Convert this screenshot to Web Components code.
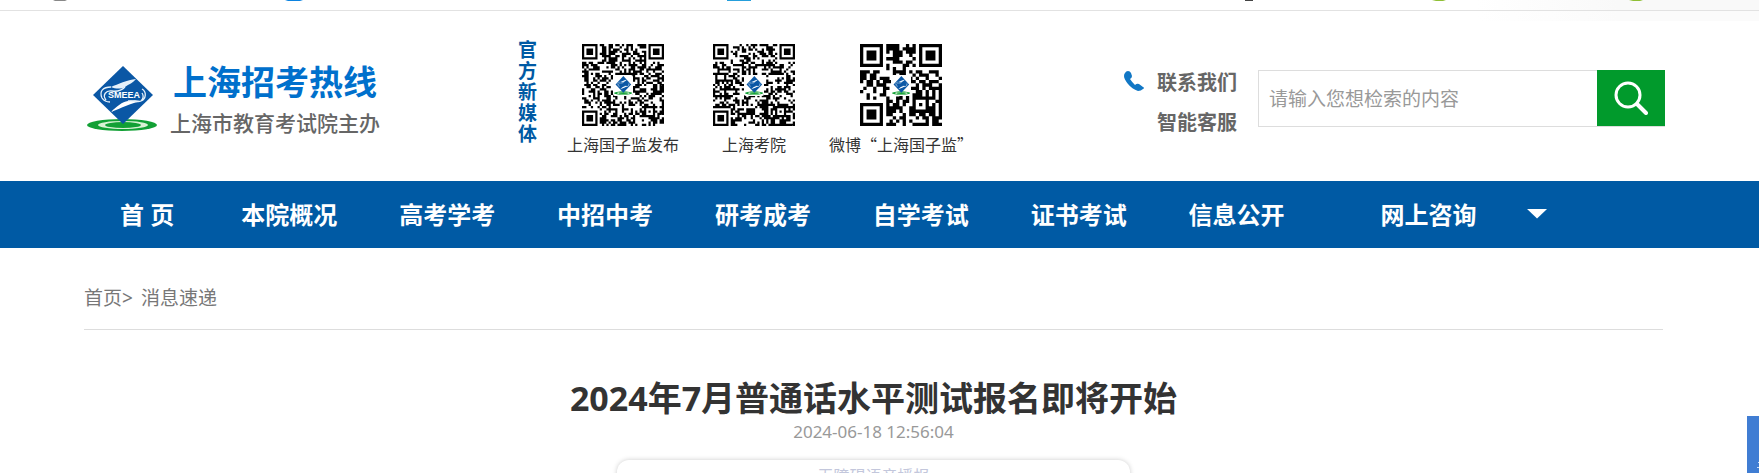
<!DOCTYPE html>
<html lang="zh-CN">
<head>
<meta charset="UTF-8">
<title>上海招考热线</title>
<style>
    html, body { margin: 0; height: 100%; overflow: hidden; }
    body {
        background: #fff; color: #333;
        font-family: "Noto Sans", "Noto Sans CJK SC", sans-serif;
        --blue: #005aa4; --line: #ddd;
        --left: 84px; --right: 96px;
    }
</style>
</head>
<body>
<top-strip></top-strip>
<site-header>
    <site-logo slot="logo"></site-logo>
    <qr-card slot="media" size="37" seed="11">上海国子监发布</qr-card>
    <qr-card slot="media" size="37" seed="29">上海考院</qr-card>
    <qr-card slot="media" size="25" seed="47">微博“上海国子监”</qr-card>
    <contact-links slot="tools"></contact-links>
    <site-search slot="tools"></site-search>
</site-header>
<site-nav></site-nav>
<page-crumb></page-crumb>
<news-article date="2024-06-18 12:56:04">2024年7月普通话水平测试报名即将开始</news-article>
<side-tab></side-tab>

<script>
const emblem = `
    <ellipse cx="35" cy="59" rx="35" ry="6" fill="#12a035"/>
    <ellipse cx="36" cy="59" rx="25" ry="4" fill="#d9f2d4"/>
    <ellipse cx="36" cy="59" rx="18" ry="3" fill="#12a035"/>
    <path d="M36 0L66 29L36 58L6 29Z" fill="#0a57a5"/>
    <path d="M49 13C40 14 31 18 24 21C29 23 34 23 38 21C42 18 46 17 49 13Z" fill="#e6f1fa"/>
    <path d="M24 46C30 40 35 36 41 35C46 34 50 34 54 35C45 37 34 42 24 46Z" fill="#fff"/>
    <path d="M24 21C16 21 12 25 15 32C17 35 20 36 23 36M19 34C15 29 19 24 25 25C31 26 35 24 38 21M41 35C48 34 50 37 54 35C59 33 60 26 55 23M54 35C56 33 57 30 55 27" fill="none" stroke="#e6f1fa" stroke-width="1.3"/>`;

class TopStrip extends HTMLElement {
    constructor() {
        super();
        this.attachShadow({ mode: 'open' });
        this.shadowRoot.innerHTML = `
        <style>
            :host { display: block; height: 10px; border-bottom: 1px solid #e2e2e2; background: linear-gradient(90deg, #fff 84%, #f9f9f9 92%); }
            svg { display: block; width: 100%; height: 2px; }
        </style>
        <svg viewBox="0 0 1759 2" preserveAspectRatio="none">
            <path d="M53 0h14l-2 1h-10z" fill="#888"/>
            <path d="M285 0h18l-3 1h-12z" fill="#0c83e0"/>
            <path d="M727 0h24v1h-24z" fill="#259edb"/>
            <path d="M1245 0h8v1h-8z" fill="#444"/>
            <path d="M1432 0h14l-3 1h-7zM1629 0h14l-3 1h-7z" fill="#8fbf35"/>
        </svg>`;
    }
}
customElements.define('top-strip', TopStrip);

class SiteHeader extends HTMLElement {
    constructor() {
        super();
        this.attachShadow({ mode: 'open' });
        this.shadowRoot.innerHTML = `
        <style>
            :host { display: flex; align-items: flex-start; padding: 28px 94px 27px var(--left); background: linear-gradient(90deg, #fff 84%, #fbfbfb 92%) top / 100% 10px no-repeat; }
            .logo { flex: 0 0 434px; }
            .media { display: flex; align-items: flex-start; gap: 34px; }
            h2 { margin: 1px -4px 0 0; width: 19px; font-size: 19px; line-height: 21px; font-weight: 700; color: var(--blue); word-break: break-all; }
            .tools { display: flex; align-items: flex-start; gap: 21px; margin-left: auto; padding-top: 31px; }
        </style>
        <div class="logo"><slot name="logo"></slot></div>
        <div class="media"><h2>官方新媒体</h2><slot name="media"></slot></div>
        <div class="tools"><slot name="tools"></slot></div>`;
    }
}
customElements.define('site-header', SiteHeader);

class SiteLogo extends HTMLElement {
    constructor() {
        super();
        this.attachShadow({ mode: 'open' });
        this.shadowRoot.innerHTML = `
        <style>
            :host { display: block; padding: 23px 0 0 3px; }
            a { display: flex; gap: 12px; color: #666; text-decoration: none; }
            svg { width: 71px; height: 65px; margin-top: 4px; }
            text { font: 700 9px "Liberation Sans", sans-serif; fill: #fff; }
            b, span { display: block; white-space: nowrap; }
            b { font-size: 34px; line-height: 40px; color: #0070cc; padding-left: 3px; }
            span { font-size: 21px; line-height: 40px; font-weight: 500; font-family: "Noto Sans CJK SC", sans-serif; }
        </style>
        <a href="#">
            <svg viewBox="0 0 71 65">${emblem}<text x="37" y="32" text-anchor="middle">SMEEA</text></svg>
            <div><b>上海招考热线</b><span>上海市教育考试院主办</span></div>
        </a>`;
    }
}
customElements.define('site-logo', SiteLogo);

class QrCard extends HTMLElement {
    constructor() {
        super();
        this.attachShadow({ mode: 'open' });
    }

    connectedCallback() { this.render(); }

    modules(n, seed) {
        let d = '';
        const rnd = () => (seed = (seed * 16807) % 2147483647) / 2147483647;
        for (let i = 0; i < 20; i++) rnd();
        const mark = n - 7;   // centre of the alignment square
        for (let y = 0; y < n; y++) {
            for (let x = 0; x < n; x++) {
                const on = rnd() > 0.46;
                const corner = (x < 8 && y < 8) || (x > n - 9 && y < 8) || (x < 8 && y > n - 9);
                if (corner) continue;
                const r = Math.max(Math.abs(x - mark), Math.abs(y - mark));
                if (r < 3 ? r !== 1 : on) d += `M${x} ${y}h1v1h-1z`;
            }
        }
        [[0, 0], [n - 7, 0], [0, n - 7]].forEach(([x, y]) => {
            d += `M${x} ${y}h7v7h-7zM${x + 1} ${y + 1}v5h5v-5zM${x + 2} ${y + 2}h3v3h-3z`;
        });
        return d;
    }

    render() {
        const n = Number(this.getAttribute('size'));
        this.shadowRoot.innerHTML = `
        <style>
            :host { display: flex; flex-direction: column; align-items: center; gap: 8px; padding-top: 5px; font: 16px/20px "Noto Sans CJK SC", sans-serif; }
            svg { width: 82px; height: 82px; }
            span { white-space: nowrap; }
        </style>
        <svg viewBox="0 0 82 82">
            <path transform="scale(${82 / n})" d="${this.modules(n, Number(this.getAttribute('seed')))}"/>
            <rect x="31" y="31" width="20" height="21" rx="2" fill="#fff"/>
            <g transform="translate(32 32) scale(.26 .29)">${emblem}</g>
        </svg>
        <span><slot></slot></span>`;
    }
}
customElements.define('qr-card', QrCard);

class ContactLinks extends HTMLElement {
    constructor() {
        super();
        this.attachShadow({ mode: 'open' });
        this.shadowRoot.innerHTML = `
        <style>
            :host { display: flex; gap: 13px; margin-top: -7px; }
            svg { width: 20px; height: 20px; margin-top: 8px; }
            a { display: block; font-size: 20px; line-height: 40px; font-weight: 700; color: #666; text-decoration: none; white-space: nowrap; }
        </style>
        <svg viewBox="0 0 20 20"><path d="M1 2Q2 0 4 0Q6 0 7 2L8 5Q8 7 6 8Q8 11 11 14Q13 12 15 13L19 16Q21 17 19 18Q17 20 14 20Q8 18 4 13Q0 8 0 5Q0 3 1 2Z" fill="#1177c5"/></svg>
        <div><a href="#">联系我们</a><a href="#">智能客服</a></div>`;
    }
}
customElements.define('contact-links', ContactLinks);

class SiteSearch extends HTMLElement {
    constructor() {
        super();
        this.attachShadow({ mode: 'open' });
        this.shadowRoot.innerHTML = `
        <style>
            :host { display: block; width: 407px; }
            form { display: flex; border: 1px solid var(--line); border-right: 0; height: 55px; }
            input { flex: 1; min-width: 0; border: 0; outline: 0; padding: 0 10px; font: inherit; font-size: 19px; color: #333; background: none; }
            input::placeholder { color: #999; opacity: 1; }
            button { width: 68px; margin-top: -1px; padding: 0; border: 0; background: #019a2c; cursor: pointer; }
            svg { display: block; width: 34px; height: 34px; margin: 0 auto; }
        </style>
        <form>
            <input type="text" placeholder="请输入您想检索的内容" aria-label="请输入您想检索的内容">
            <button type="submit" aria-label="搜索">
                <svg viewBox="0 0 34 34" fill="none" stroke="#fff" stroke-linecap="round"><circle cx="14" cy="14" r="12" stroke-width="3"/><path d="M23 23L32 32" stroke-width="4"/></svg>
            </button>
        </form>`;
        this.shadowRoot.querySelector('form').onsubmit = (e) => e.preventDefault();
    }
}
customElements.define('site-search', SiteSearch);

class SiteNav extends HTMLElement {
    constructor() {
        super();
        this.attachShadow({ mode: 'open' });
        this.itens = ["本院概况", "高考学考", "中招中考", "研考成考", "自学考试", "证书考试", "信息公开"];
        this.shadowRoot.innerHTML = `
        <style>
            :host { display: block; background: var(--blue); padding: 0 var(--right) 0 var(--left); }
            nav { display: flex; align-items: center; }
            a { flex: 0 0 10%; text-align: center; font-size: 24px; line-height: 67px; font-weight: 700; color: #fff; text-decoration: none; white-space: nowrap; }
            .home { flex-basis: 8%; }
            .ask { flex: 0 0 auto; padding-left: 65px; }
            button { width: 21px; height: 10px; margin: 0 0 2px 50px; padding: 0; border: 0; background: #fff; clip-path: polygon(0 0, 100% 0, 50% 100%); }
        </style>
        <nav>
            <a class="home" href="#">首 页</a>
            ${this.itens.map((item) => `<a href="#">${item}</a>`).join('')}
            <a class="ask" href="#">网上咨询</a>
            <button type="button" aria-label="更多"></button>
        </nav>`;
    }
}
customElements.define('site-nav', SiteNav);

class PageCrumb extends HTMLElement {
    constructor() {
        super();
        this.attachShadow({ mode: 'open' });
        this.shadowRoot.innerHTML = `
        <style>
            :host { display: flex; gap: 8px; margin: 0 var(--right) 0 var(--left); padding: 35px 0 16px; border-bottom: 1px solid var(--line); font-size: 19px; line-height: 30px; color: #777; }
            a { color: inherit; text-decoration: none; }
        </style>
        <span><a href="#">首页</a>&gt;</span><a href="#">消息速递</a>`;
    }
}
customElements.define('page-crumb', PageCrumb);

class NewsArticle extends HTMLElement {
    constructor() {
        super();
        this.attachShadow({ mode: 'open' });
    }

    connectedCallback() {
        this.shadowRoot.innerHTML = `
        <style>
            :host { display: block; margin: 0 var(--right) 0 var(--left); padding-top: 44px; text-align: center; }
            h1 { margin: 0; font-size: 34px; line-height: 48px; font-weight: 700; }
            time { display: block; font-size: 17px; line-height: 20px; color: #999; }
            .player { width: 513px; height: 80px; margin: 18px auto 0; border-radius: 12px; box-shadow: 0 0 5px #ccc; font-size: 16px; line-height: 32px; color: #c3c7dc; }
        </style>
        <h1><slot></slot></h1>
        <time>${this.getAttribute('date')}</time>
        <div class="player">无障碍语音播报</div>`;
    }
}
customElements.define('news-article', NewsArticle);

// drawer handle that hangs over the right edge of the window
class SideTab extends HTMLElement {
    constructor() {
        super();
        this.attachShadow({ mode: 'open' });
        this.shadowRoot.innerHTML = `
        <style>
            :host { display: block; position: fixed; right: 0; top: 416px; bottom: 0; width: 12px; background: #407dd3; }
            svg { display: block; width: 12px; height: 57px; }
        </style>
        <svg viewBox="0 0 12 57"><path d="M11 46h1v1h-1zM10 51h2v1h-2z" fill="#cfe0f7"/></svg>`;
    }
}
customElements.define('side-tab', SideTab);
</script>
</body>
</html>
